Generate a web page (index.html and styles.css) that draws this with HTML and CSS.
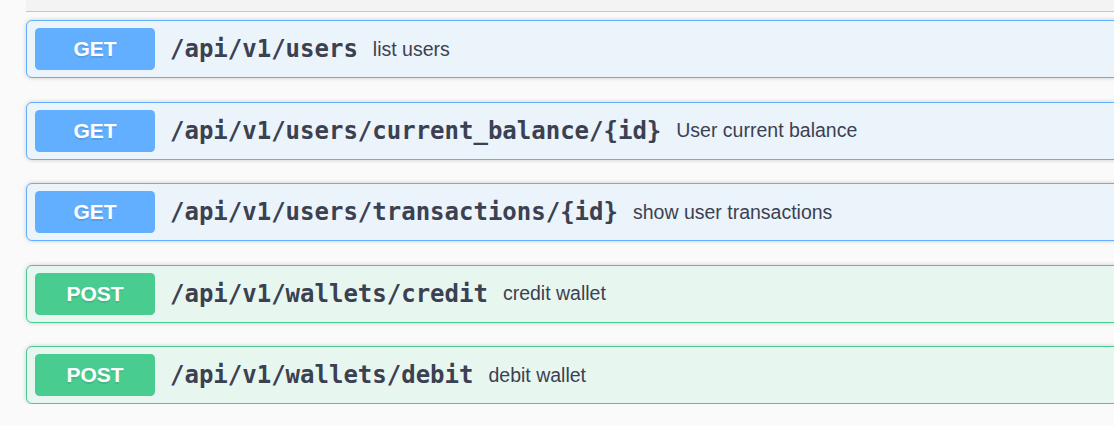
FILE: index.html
```html
<!DOCTYPE html>
<html>
<head>
<meta charset="utf-8">
<link rel="stylesheet" href="styles.css">
</head>
<body>
<div class="page">
  <div class="tag-header"></div>
  <div class="ops">
    <div class="opblock get">
      <span class="method">GET</span>
      <span class="path">/api/v1/users</span>
      <span class="desc">list users</span>
    </div>
    <div class="opblock get">
      <span class="method">GET</span>
      <span class="path">/api/v1/users/current_balance/{id}</span>
      <span class="desc">User current balance</span>
    </div>
    <div class="opblock get">
      <span class="method">GET</span>
      <span class="path">/api/v1/users/transactions/{id}</span>
      <span class="desc">show user transactions</span>
    </div>
    <div class="opblock post">
      <span class="method">POST</span>
      <span class="path">/api/v1/wallets/credit</span>
      <span class="desc">credit wallet</span>
    </div>
    <div class="opblock post">
      <span class="method">POST</span>
      <span class="path">/api/v1/wallets/debit</span>
      <span class="desc">debit wallet</span>
    </div>
  </div>
</div>
</body>
</html>
```
FILE: styles.css
```css
html, body {
  margin: 0;
  padding: 0;
  background: #fafafa;
  overflow: hidden;
}
.page {
  padding-left: 26px;
  width: 1140px;
}
.tag-header {
  height: 11px;
  background: #f3f3f3;
  border-bottom: 1px solid #c8c8c8;
}
.ops {
  padding-top: 8px;
  display: flex;
  flex-direction: column;
  gap: 23.5px;
}
.opblock {
  display: flex;
  align-items: center;
  box-sizing: border-box;
  height: 58px;
  padding: 0 8px;
  border: 1px solid #61affe;
  border-radius: 6px;
  box-shadow: 0 0 4.5px rgba(0, 0, 0, 0.19);
}
.opblock.get {
  background: #ebf3fb;
  border-color: #61affe;
}
.opblock.post {
  background: #e8f6f0;
  border-color: #49cc90;
}
.method {
  flex: none;
  width: 120px;
  height: 42px;
  display: flex;
  align-items: center;
  justify-content: center;
  border-radius: 4.5px;
  color: #fff;
  font-family: "Liberation Sans", Arial, sans-serif;
  font-weight: 700;
  font-size: 21px;
  text-shadow: 0 1.5px 0 rgba(0, 0, 0, 0.1);
}
.get .method { background: #61affe; }
.post .method { background: #49cc90; }
.path {
  padding: 0 15px 0 15px;
  font-family: "DejaVu Sans Mono", monospace;
  font-weight: 700;
  font-size: 24px;
  color: #3b4151;
}
.desc {
  font-family: "Liberation Sans", Arial, sans-serif;
  font-size: 19.5px;
  color: #3b4151;
}
```
